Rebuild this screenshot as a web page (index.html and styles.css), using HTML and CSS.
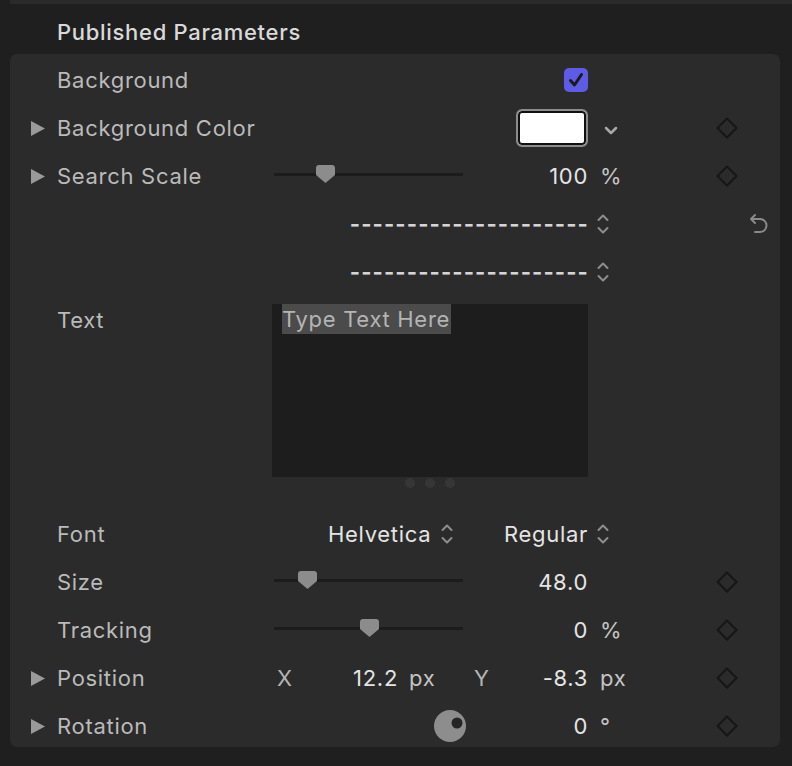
FILE: index.html
```html
<!DOCTYPE html>
<html lang="en">

<head>
    <meta charset="UTF-8">
    <meta name="viewport" content="width=device-width, initial-scale=1.0">
    <title>Published Parameters</title>
    <link rel="stylesheet" href="styles.css">
</head>

<body>
    <div class="top-strip"></div>
    <div class="header">Published Parameters</div>

    <div class="panel">
        <!-- Background -->
        <div class="row">
            <div class="disc"></div>
            <div class="label">Background</div>
            <div class="ctl ctl-end">
                <div class="checkbox">
                    <svg width="24" height="24" viewBox="0 0 24 24"><path d="M6.5 12.5 L10.5 17 L17.5 6.5" fill="none" stroke="#1a1a1a" stroke-width="3" stroke-linecap="round" stroke-linejoin="round"/></svg>
                </div>
            </div>
        </div>

        <!-- Background Color -->
        <div class="row">
            <div class="disc"><svg class="tri" width="14" height="15" viewBox="0 0 14 15"><path d="M0 0 L14 7.5 L0 15Z" fill="#9a9a9a"/></svg></div>
            <div class="label">Background Color</div>
            <div class="ctl ctl-end">
                <div class="well"></div>
            </div>
            <div class="unit chev-down">
                <svg width="14" height="9" viewBox="0 0 14 9"><path d="M2 2 L7 7 L12 2" fill="none" stroke="#a8a8a8" stroke-width="2.5" stroke-linecap="round" stroke-linejoin="round"/></svg>
            </div>
            <div class="gap"></div>
            <div class="key"><svg width="22" height="22" viewBox="0 0 22 22"><path d="M11 1.5 L20.5 11 L11 20.5 L1.5 11Z" fill="none" stroke="#161616" stroke-width="2"/></svg></div>
        </div>

        <!-- Search Scale -->
        <div class="row">
            <div class="disc"><svg class="tri" width="14" height="15" viewBox="0 0 14 15"><path d="M0 0 L14 7.5 L0 15Z" fill="#9a9a9a"/></svg></div>
            <div class="label">Search Scale</div>
            <div class="ctl">
                <div class="slider">
                    <div class="track"></div>
                    <svg class="thumb" style="left: 42px" width="19" height="18" viewBox="0 0 19 18"><path d="M3 0 H16 Q19 0 19 3 V10 L9.5 18 L0 10 V3 Q0 0 3 0Z" fill="#8c8c8c"/></svg>
                </div>
                <div class="value">100</div>
            </div>
            <div class="unit">%</div>
            <div class="gap"></div>
            <div class="key"><svg width="22" height="22" viewBox="0 0 22 22"><path d="M11 1.5 L20.5 11 L11 20.5 L1.5 11Z" fill="none" stroke="#161616" stroke-width="2"/></svg></div>
        </div>

        <!-- popup 1 -->
        <div class="row">
            <div class="disc"></div>
            <div class="label"></div>
            <div class="ctl ctl-end">
                <div class="dashes">---------------------</div>
            </div>
            <div class="unit updown">
                <svg width="14" height="24" viewBox="0 0 14 24"><path d="M2.5 8 L7 3.5 L11.5 8 M2.5 16 L7 20.5 L11.5 16" fill="none" stroke="#8e8e8e" stroke-width="2" stroke-linecap="round" stroke-linejoin="round"/></svg>
            </div>
            <div class="gap"></div>
            <div class="key"></div>
            <div class="reset">
                <svg width="20" height="22" viewBox="0 0 20 22"><path d="M6 2 L2 6 L6 10 M2 6 H11 A6.5 6.5 0 0 1 11 19 H6" fill="none" stroke="#8a8a8a" stroke-width="2" stroke-linecap="round" stroke-linejoin="round"/></svg>
            </div>
        </div>

        <!-- popup 2 -->
        <div class="row">
            <div class="disc"></div>
            <div class="label"></div>
            <div class="ctl ctl-end">
                <div class="dashes">---------------------</div>
            </div>
            <div class="unit updown">
                <svg width="14" height="24" viewBox="0 0 14 24"><path d="M2.5 8 L7 3.5 L11.5 8 M2.5 16 L7 20.5 L11.5 16" fill="none" stroke="#8e8e8e" stroke-width="2" stroke-linecap="round" stroke-linejoin="round"/></svg>
            </div>
        </div>

        <!-- Text -->
        <div class="row row-text">
            <div class="disc"></div>
            <div class="label">Text</div>
            <div class="ctl ctl-col">
                <div class="textbox"><span class="sel">Type Text Here</span></div>
                <div class="grip"><span></span><span></span><span></span></div>
            </div>
        </div>

        <!-- Font -->
        <div class="row">
            <div class="disc"></div>
            <div class="label">Font</div>
            <div class="ctl font-ctl">
                <span class="value">Helvetica</span>
                <svg class="updown-i" width="14" height="24" viewBox="0 0 14 24"><path d="M2.5 8 L7 3.5 L11.5 8 M2.5 16 L7 20.5 L11.5 16" fill="none" stroke="#8e8e8e" stroke-width="2" stroke-linecap="round" stroke-linejoin="round"/></svg>
                <span class="value push">Regular</span>
            </div>
            <div class="unit updown">
                <svg width="14" height="24" viewBox="0 0 14 24"><path d="M2.5 8 L7 3.5 L11.5 8 M2.5 16 L7 20.5 L11.5 16" fill="none" stroke="#8e8e8e" stroke-width="2" stroke-linecap="round" stroke-linejoin="round"/></svg>
            </div>
        </div>

        <!-- Size -->
        <div class="row">
            <div class="disc"></div>
            <div class="label">Size</div>
            <div class="ctl">
                <div class="slider">
                    <div class="track"></div>
                    <svg class="thumb" style="left: 24px" width="19" height="18" viewBox="0 0 19 18"><path d="M3 0 H16 Q19 0 19 3 V10 L9.5 18 L0 10 V3 Q0 0 3 0Z" fill="#8c8c8c"/></svg>
                </div>
                <div class="value">48.0</div>
            </div>
            <div class="unit"></div>
            <div class="gap"></div>
            <div class="key"><svg width="22" height="22" viewBox="0 0 22 22"><path d="M11 1.5 L20.5 11 L11 20.5 L1.5 11Z" fill="none" stroke="#161616" stroke-width="2"/></svg></div>
        </div>

        <!-- Tracking -->
        <div class="row">
            <div class="disc"></div>
            <div class="label">Tracking</div>
            <div class="ctl">
                <div class="slider">
                    <div class="track"></div>
                    <svg class="thumb" style="left: 86px" width="19" height="18" viewBox="0 0 19 18"><path d="M3 0 H16 Q19 0 19 3 V10 L9.5 18 L0 10 V3 Q0 0 3 0Z" fill="#8c8c8c"/></svg>
                </div>
                <div class="value">0</div>
            </div>
            <div class="unit">%</div>
            <div class="gap"></div>
            <div class="key"><svg width="22" height="22" viewBox="0 0 22 22"><path d="M11 1.5 L20.5 11 L11 20.5 L1.5 11Z" fill="none" stroke="#161616" stroke-width="2"/></svg></div>
        </div>

        <!-- Position -->
        <div class="row">
            <div class="disc"><svg class="tri" width="14" height="15" viewBox="0 0 14 15"><path d="M0 0 L14 7.5 L0 15Z" fill="#9a9a9a"/></svg></div>
            <div class="label">Position</div>
            <div class="ctl pos-ctl">
                <span class="axis">X</span>
                <span class="value">12.2</span>
                <span class="pos-unit">px</span>
                <span class="axis">Y</span>
                <span class="value">-8.3</span>
            </div>
            <div class="unit">px</div>
            <div class="gap"></div>
            <div class="key"><svg width="22" height="22" viewBox="0 0 22 22"><path d="M11 1.5 L20.5 11 L11 20.5 L1.5 11Z" fill="none" stroke="#161616" stroke-width="2"/></svg></div>
        </div>

        <!-- Rotation -->
        <div class="row">
            <div class="disc"><svg class="tri" width="14" height="15" viewBox="0 0 14 15"><path d="M0 0 L14 7.5 L0 15Z" fill="#9a9a9a"/></svg></div>
            <div class="label">Rotation</div>
            <div class="ctl rot-ctl">
                <svg class="dial" width="32" height="32" viewBox="0 0 32 32"><circle cx="16" cy="16" r="16" fill="#8d8d8d"/><circle cx="23" cy="13" r="5.5" fill="#252525"/></svg>
                <div class="value">0</div>
            </div>
            <div class="unit">°</div>
            <div class="gap"></div>
            <div class="key"><svg width="22" height="22" viewBox="0 0 22 22"><path d="M11 1.5 L20.5 11 L11 20.5 L1.5 11Z" fill="none" stroke="#161616" stroke-width="2"/></svg></div>
        </div>
    </div>
</body>

</html>
```

FILE: styles.css
```css
body {
    margin: 0;
    height: 766px;
    background-color: #1f1f1f;
    font-family: Inter, "Noto Sans", sans-serif;
    font-size: 22px;
    letter-spacing: 0.7px;
    color: #bababa;
    overflow: hidden;
}

.top-strip {
    height: 4px;
    margin-left: 10px;
    background-color: #2a2a2a;
}

.header {
    height: 50px;
    line-height: 56px;
    padding-left: 57px;
    color: #d9d9d9;
    font-weight: 500;
}

.panel {
    margin: 0 12px 0 10px;
    height: 693px;
    padding-top: 2px;
    box-sizing: border-box;
    background-color: #2b2b2b;
    border-radius: 7px;
    overflow: hidden;
}

.row {
    display: grid;
    grid-template-columns: 47px 215px 316px 52px 76px 22px 1fr;
    align-items: center;
    height: 48px;
}

.disc {
    display: flex;
    align-items: center;
    padding-left: 21px;
}

.label {
    white-space: nowrap;
}

.ctl {
    display: flex;
    align-items: center;
}

.ctl-end {
    justify-content: flex-end;
}

.value {
    color: #e4e4e4;
    white-space: nowrap;
}

.ctl > .value {
    flex: 1;
    text-align: right;
}

.unit {
    padding-left: 12px;
    color: #c4c4c4;
}

.key {
    display: flex;
    align-items: center;
}

.reset {
    display: flex;
    align-items: center;
    padding-left: 11px;
}

/* checkbox */
.checkbox {
    width: 24px;
    height: 24px;
    border-radius: 5px;
    background-color: #5e5ce6;
    display: flex;
}

/* colour well */
.well {
    width: 72px;
    height: 38px;
    box-sizing: border-box;
    border: 2px solid #8c8c8c;
    border-radius: 6px;
    background-color: #ffffff;
    box-shadow: inset 0 0 0 2px #111111;
}

.chev-down {
    display: flex;
    align-items: center;
    padding-left: 16px;
    padding-top: 4px;
}

/* slider */
.slider {
    position: relative;
    width: 189px;
    height: 18px;
    margin-left: 2px;
}

.track {
    position: absolute;
    left: 0;
    right: 0;
    top: 6px;
    height: 3px;
    background-color: #1c1c1c;
}

.thumb {
    position: absolute;
    top: -2px;
}

/* popups */
.dashes {
    color: #d4d4d4;
    font-weight: 700;
    letter-spacing: 1.1px;
    margin-right: -1px;
}

.updown {
    display: flex;
    align-items: center;
    padding-left: 8px;
}

/* text box */
.row-text {
    height: 214px;
    align-items: start;
}

.row-text .label {
    line-height: 48px;
}

.ctl-col {
    flex-direction: column;
    align-items: stretch;
}

.textbox {
    margin-top: 8px;
    height: 173px;
    background-color: #1d1d1d;
    padding-left: 10px;
    line-height: 30px;
}

.sel {
    display: inline-block;
    background-color: #4b4b4b;
    color: #b4b4b4;
    padding-right: 1px;
}

.grip {
    display: flex;
    justify-content: center;
    gap: 10px;
    margin-top: 1px;
}

.grip span {
    width: 10px;
    height: 10px;
    border-radius: 50%;
    background-color: #363636;
}

/* font */
.font-ctl {
    padding-left: 56px;
}

.font-ctl > .value {
    flex: none;
}

.updown-i {
    margin-left: 9px;
}

.font-ctl .push {
    margin-left: auto;
}

/* position */
.pos-ctl {
    display: grid;
    grid-template-columns: 30px 96px 71px 31px 88px;
}

.axis {
    padding-left: 5px;
    color: #b4b4b4;
}

.pos-ctl .value {
    text-align: right;
}

.pos-unit {
    padding-left: 11px;
    color: #c4c4c4;
}

/* rotation */
.dial {
    margin-left: 162px;
}
```
